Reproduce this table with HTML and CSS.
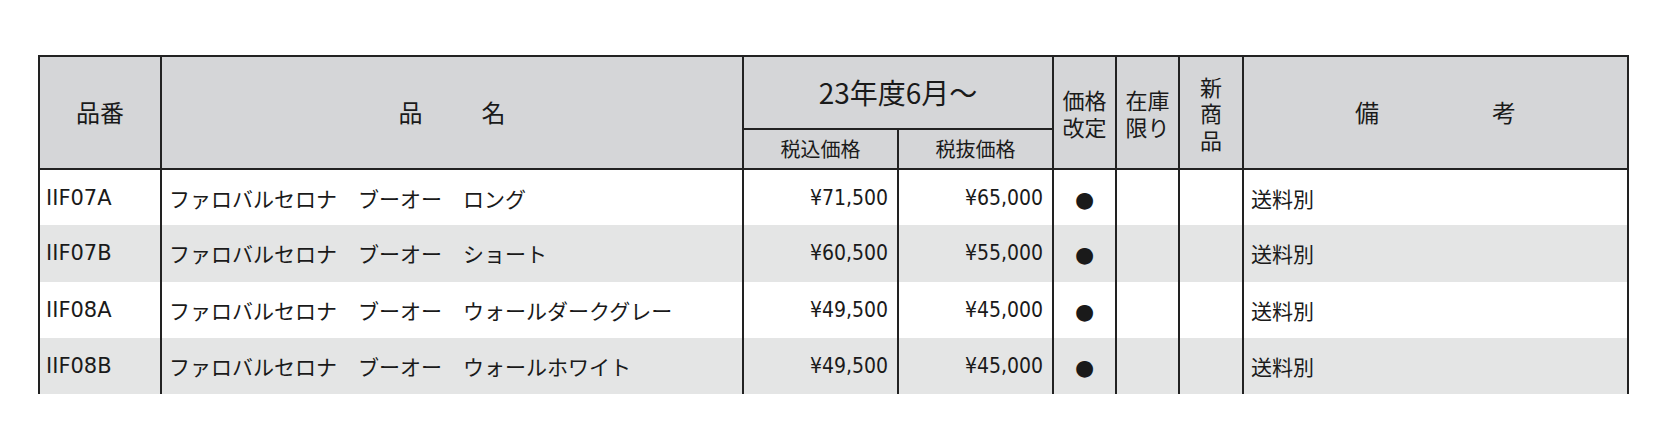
FILE: index.html
```html
<!DOCTYPE html>
<html lang="ja">
<head>
<meta charset="utf-8">
<title>価格表</title>
<link rel="stylesheet" href="styles.css">
</head>
<body>
<div class="sheet">
  <table class="price-table">
    <colgroup>
      <col class="c-code">
      <col class="c-name">
      <col class="c-price">
      <col class="c-price">
      <col class="c-flag">
      <col class="c-flag">
      <col class="c-flag2">
      <col class="c-note">
    </colgroup>
    <thead>
      <tr class="head-top">
        <th rowspan="2" class="h-single">品番</th>
        <th rowspan="2" class="h-single"><span class="spread spread-name"><span>品</span><span>名</span></span></th>
        <th colspan="2" class="h-period">23年度6月〜</th>
        <th rowspan="2" class="h-multi">価格<br>改定</th>
        <th rowspan="2" class="h-multi">在庫<br>限り</th>
        <th rowspan="2" class="h-multi">新<br>商<br>品</th>
        <th rowspan="2" class="h-single"><span class="spread spread-note"><span>備</span><span>考</span></span></th>
      </tr>
      <tr class="head-sub">
        <th class="h-sub">税込価格</th>
        <th class="h-sub">税抜価格</th>
      </tr>
    </thead>
    <tbody>
      <tr>
        <td class="code">IIF07A</td>
        <td class="name">ファロバルセロナ　ブーオー　ロング</td>
        <td class="price">¥71,500</td>
        <td class="price">¥65,000</td>
        <td class="flag"><span class="dot">●</span></td>
        <td class="flag"></td>
        <td class="flag"></td>
        <td class="note">送料別</td>
      </tr>
      <tr>
        <td class="code">IIF07B</td>
        <td class="name">ファロバルセロナ　ブーオー　ショート</td>
        <td class="price">¥60,500</td>
        <td class="price">¥55,000</td>
        <td class="flag"><span class="dot">●</span></td>
        <td class="flag"></td>
        <td class="flag"></td>
        <td class="note">送料別</td>
      </tr>
      <tr>
        <td class="code">IIF08A</td>
        <td class="name">ファロバルセロナ　ブーオー　ウォールダークグレー</td>
        <td class="price">¥49,500</td>
        <td class="price">¥45,000</td>
        <td class="flag"><span class="dot">●</span></td>
        <td class="flag"></td>
        <td class="flag"></td>
        <td class="note">送料別</td>
      </tr>
      <tr>
        <td class="code">IIF08B</td>
        <td class="name">ファロバルセロナ　ブーオー　ウォールホワイト</td>
        <td class="price">¥49,500</td>
        <td class="price">¥45,000</td>
        <td class="flag"><span class="dot">●</span></td>
        <td class="flag"></td>
        <td class="flag"></td>
        <td class="note">送料別</td>
      </tr>
    </tbody>
  </table>
</div>
</body>
</html>
```
FILE: styles.css
```css
html, body {
  margin: 0;
  padding: 0;
  background: #ffffff;
}

body {
  font-family: "Noto Sans CJK JP", sans-serif;
  color: #1a1a1a;
}

.sheet {
  padding: 55px 0 0 38px;
}

.price-table {
  border-collapse: collapse;
  table-layout: fixed;
  width: 1591px;
}

.c-code { width: 122px; }
.c-name { width: 582px; }
.c-price { width: 155px; }
.c-flag { width: 63px; }
.c-flag2 { width: 64px; }
.c-note { width: 385px; }

.price-table th {
  background: #d5d6d8;
  border: 2px solid #222222;
  font-weight: normal;
  padding: 0;
  text-align: center;
  vertical-align: middle;
  line-height: 1.2;
}

.head-top { height: 73px; }
.head-sub { height: 40px; }

.h-single {
  font-size: 24px;
  padding-top: 6px;
}

.h-period {
  font-size: 28px;
  padding-top: 12px;
}

.h-sub {
  font-size: 20px;
  padding-top: 1px;
}

.h-multi {
  font-size: 22px;
  line-height: 32px;
  padding-top: 20px;
}

.spread {
  display: inline-flex;
}

.spread-name { gap: 59px; }
.spread-note { gap: 113px; }

.price-table tbody tr {
  height: 56.25px;
}

.price-table tbody tr:nth-child(even) td {
  background: #e4e5e5;
}

.price-table td {
  border-left: 2px solid #222222;
  border-right: 2px solid #222222;
  padding: 0 7px;
  font-size: 21px;
  vertical-align: middle;
  white-space: nowrap;
}

.price-table td.code {
  font-family: "DejaVu Sans", "Noto Sans CJK JP", sans-serif;
  padding-left: 6px;
}

.price-table td.price {
  font-family: "DejaVu Sans Condensed", "DejaVu Sans", sans-serif;
  text-align: right;
  padding-right: 9px;
}

.price-table td.flag {
  text-align: center;
  padding: 0;
}

.dot {
  font-family: "DejaVu Sans", sans-serif;
  font-size: 22px;
}
```
